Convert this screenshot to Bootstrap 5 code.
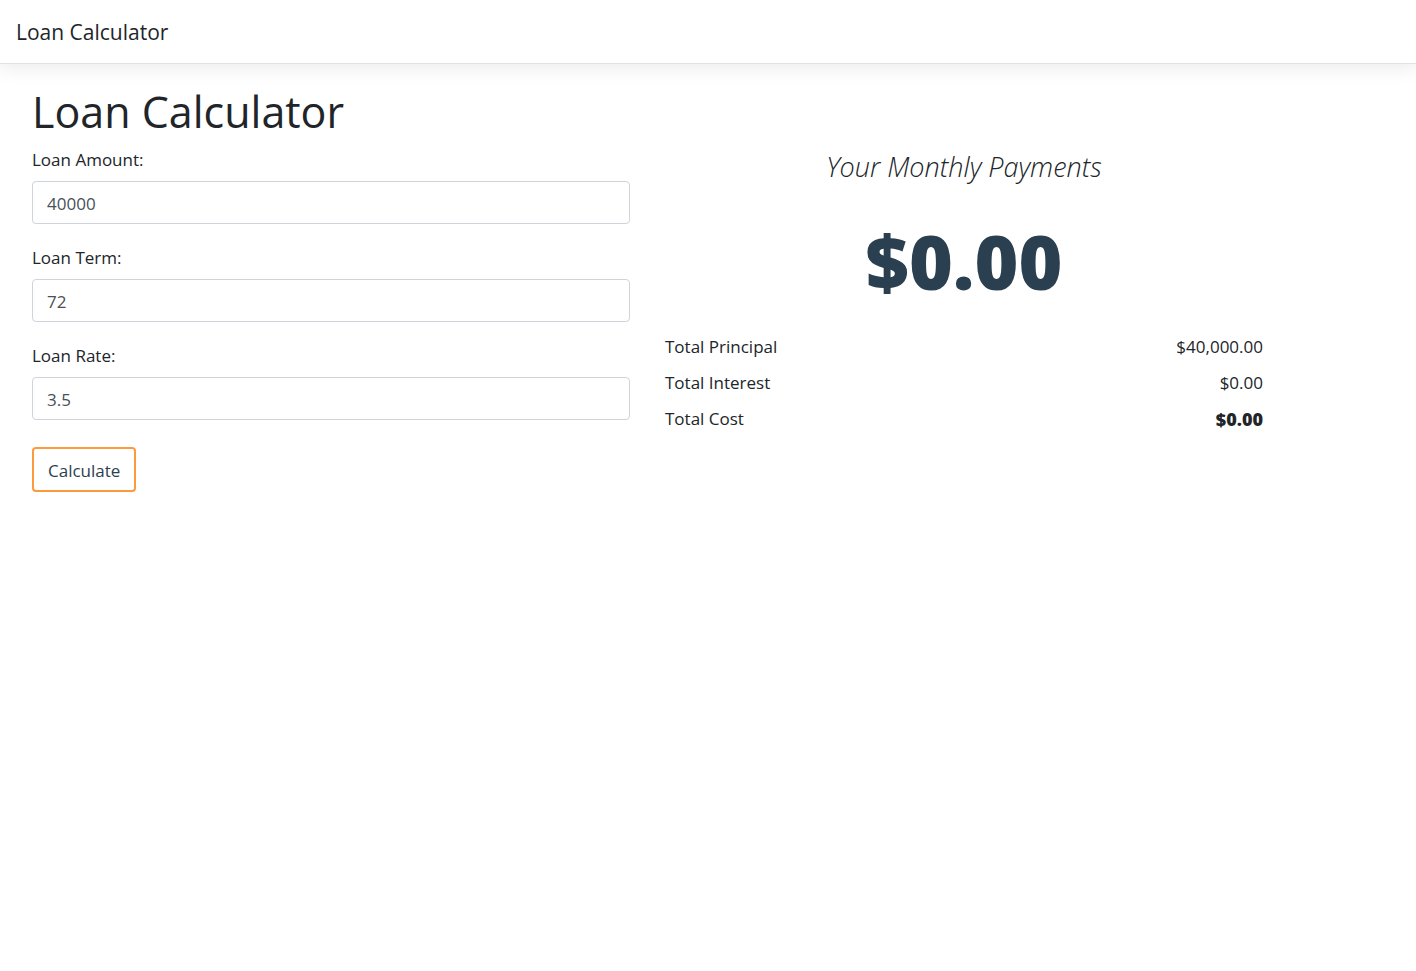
<!DOCTYPE html>
<html lang="en">
<head>
<meta charset="utf-8">
<meta name="viewport" content="width=device-width, initial-scale=1">
<title>Loan Calculator</title>
<link href="https://cdn.jsdelivr.net/npm/bootstrap@5.3.0/dist/css/bootstrap.min.css" rel="stylesheet">
<style>
  body { font-family: "Open Sans", "Noto Sans", sans-serif; font-size: 17px; font-weight: 400; line-height: 26px; }
  .site-bar { height: 64px; border-color: #dee2e6; box-shadow: 0 2px 18px 2px rgba(0, 0, 0, .08); }
  .navbar-brand { font-size: 21px; line-height: 32px; color: #212529; }
  .calc { max-width: 1280px; padding: 21px 17px 0 32px; }
  .calc .row { --bs-gutter-x: 35px; }
  h1 { font-size: 43px; font-weight: 400; line-height: 54px; }
  .form-label { margin-bottom: 8px; }
  .form-control { height: 43px; padding: 8px 14px 6px; font-size: 17px; color: #495057; border-color: #ced4da; border-radius: 4px; }
  .field { margin-bottom: 21px; }
  .btn-calc { --bs-btn-color: #2a3f4f; --bs-btn-border-color: #fd9a3e; --bs-btn-hover-bg: #fd9a3e; height: 45px; padding: 2px 14px 0; margin-top: 6px; font-size: 17px; border-width: 2px; border-radius: 4px; }
  .result-title { font-size: 27px; font-weight: 300; line-height: 40px; }
  .result-sum { font-size: 75px; line-height: 88px; font-weight: 800; color: #2a3f4f; margin: 30px 0 24px; }
  .totals { --bs-table-bg: transparent; }
  .totals th, .totals td { padding: 5px 0; border: 0; font-weight: 400; }
  .totals .total-cost { font-size: 18px; font-weight: 800; }
</style>
</head>
<body>
<nav class="navbar bg-white border-bottom site-bar">
  <div class="container-fluid px-3">
    <a class="navbar-brand p-0" href="#">Loan Calculator</a>
  </div>
</nav>
<main class="calc">
  <h1>Loan Calculator</h1>
  <div class="row">
    <form class="col-md-6">
      <div class="field">
        <label class="form-label" for="amount">Loan Amount:</label>
        <input class="form-control" id="amount" type="text" inputmode="decimal" value="40000">
      </div>
      <div class="field">
        <label class="form-label" for="term">Loan Term:</label>
        <input class="form-control" id="term" type="text" inputmode="numeric" value="72">
      </div>
      <div class="field">
        <label class="form-label" for="rate">Loan Rate:</label>
        <input class="form-control" id="rate" type="text" inputmode="decimal" value="3.5">
      </div>
      <button class="btn btn-calc" type="button">Calculate</button>
    </form>
    <section class="col-md-6">
      <p class="result-title text-center fst-italic mb-0">Your Monthly Payments</p>
      <p class="result-sum text-center">$0.00</p>
      <table class="table totals mb-0">
        <tbody>
          <tr><th scope="row">Total Principal</th><td class="text-end">$40,000.00</td></tr>
          <tr><th scope="row">Total Interest</th><td class="text-end">$0.00</td></tr>
          <tr><th scope="row">Total Cost</th><td class="text-end total-cost">$0.00</td></tr>
        </tbody>
      </table>
    </section>
  </div>
</main>
<script src="https://cdn.jsdelivr.net/npm/bootstrap@5.3.0/dist/js/bootstrap.bundle.min.js"></script>
</body>
</html>
